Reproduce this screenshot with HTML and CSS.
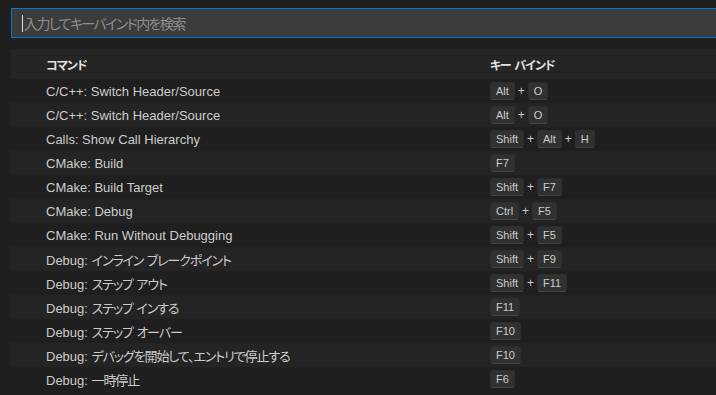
FILE: index.html
```html
<!doctype html>
<html lang="ja">
<head>
    <meta charset="UTF-8">
    <title>キーボード ショートカット</title>
    <link rel="stylesheet" href="styles.css">
</head>
<body>
    <div id="editor">
        <div class="search">
            <span class="caret"></span>
            <span class="placeholder">入力してキーバインド内を検索</span>
        </div>
        <div class="table">
            <div class="head">
                <span class="col-cmd">コマンド</span>
                <span class="col-key">キー バインド</span>
            </div>
            <ul class="rows">
                <li><span class="col-cmd">C/C++: Switch Header/Source</span><span class="col-key"><kbd>Alt</kbd><i>+</i><kbd>O</kbd></span></li>
                <li class="odd"><span class="col-cmd">C/C++: Switch Header/Source</span><span class="col-key"><kbd>Alt</kbd><i>+</i><kbd>O</kbd></span></li>
                <li><span class="col-cmd">Calls: Show Call Hierarchy</span><span class="col-key"><kbd>Shift</kbd><i>+</i><kbd>Alt</kbd><i>+</i><kbd>H</kbd></span></li>
                <li class="odd"><span class="col-cmd">CMake: Build</span><span class="col-key"><kbd>F7</kbd></span></li>
                <li><span class="col-cmd">CMake: Build Target</span><span class="col-key"><kbd>Shift</kbd><i>+</i><kbd>F7</kbd></span></li>
                <li class="odd"><span class="col-cmd">CMake: Debug</span><span class="col-key"><kbd>Ctrl</kbd><i>+</i><kbd>F5</kbd></span></li>
                <li><span class="col-cmd">CMake: Run Without Debugging</span><span class="col-key"><kbd>Shift</kbd><i>+</i><kbd>F5</kbd></span></li>
                <li class="odd"><span class="col-cmd">Debug: <span class="ja">インライン ブレークポイント</span></span><span class="col-key"><kbd>Shift</kbd><i>+</i><kbd>F9</kbd></span></li>
                <li><span class="col-cmd">Debug: <span class="ja">ステップ アウト</span></span><span class="col-key"><kbd>Shift</kbd><i>+</i><kbd>F11</kbd></span></li>
                <li class="odd"><span class="col-cmd">Debug: <span class="ja">ステップ インする</span></span><span class="col-key"><kbd>F11</kbd></span></li>
                <li><span class="col-cmd">Debug: <span class="ja">ステップ オーバー</span></span><span class="col-key"><kbd>F10</kbd></span></li>
                <li class="odd"><span class="col-cmd">Debug: <span class="ja">デバッグを開始して、エントリで停止する</span></span><span class="col-key"><kbd>F10</kbd></span></li>
                <li><span class="col-cmd">Debug: <span class="ja">一時停止</span></span><span class="col-key"><kbd>F6</kbd></span></li>
            </ul>
        </div>
    </div>
</body>
</html>
```

FILE: styles.css
```css
*{
    margin:0;
    padding:0;
    box-sizing: border-box;
}
ul,li{
    list-style: none;
}
html,body{
    height: 100%;
    overflow: hidden;
}
body{
    background: #1f1f1f;
    color: #cccccc;
    font-family: "Liberation Sans", "Noto Sans CJK JP", sans-serif;
    font-size: 13px;
    font-feature-settings: "palt";
}
#editor{
    width: 716px;
    padding: 8px 0 0 11px;
}
.search{
    width: 720px;
    height: 30px;
    background: #3c3c3c;
    border: 1px solid #0078d4;
    display: flex;
    align-items: center;
    padding-left: 10px;
    font-size: 14px;
}
.search .caret{
    width: 1px;
    height: 17px;
    background: #e0e0e0;
    margin-right: 1px;
}
.search .placeholder{
    color: #8f8f8f;
    font-family: "Noto Sans CJK JP", sans-serif;
    letter-spacing: -1.6px;
}
.table{
    margin-top: 11px;
}
.head{
    height: 30px;
    display: flex;
    align-items: center;
    background: #252525;
    font-weight: bold;
    font-family: "Noto Sans CJK JP", sans-serif;
    font-size: 12px;
    letter-spacing: -1px;
    word-spacing: 2px;
    color: #e0e0e0;
}
.col-cmd{
    width: 479px;
    padding-left: 35px;
    white-space: nowrap;
}
.col-cmd .ja{
    letter-spacing: -1.1px;
    word-spacing: 1px;
}
.col-key{
    display: flex;
    align-items: center;
}
.rows li{
    height: 24px;
    display: flex;
    align-items: center;
}
.rows li.odd{
    background: #242424;
}
kbd{
    font-family: "Liberation Sans", sans-serif;
    font-size: 11px;
    height: 18px;
    line-height: 16px;
    padding: 0 5px;
    border-radius: 3px;
    background: #313131;
    border: 1px solid #2e2e2e;
    border-bottom-color: #444444;
    color: #cccccc;
}
.col-key i{
    font-style: normal;
    font-size: 12px;
    width: 13px;
    text-align: center;
}
```
